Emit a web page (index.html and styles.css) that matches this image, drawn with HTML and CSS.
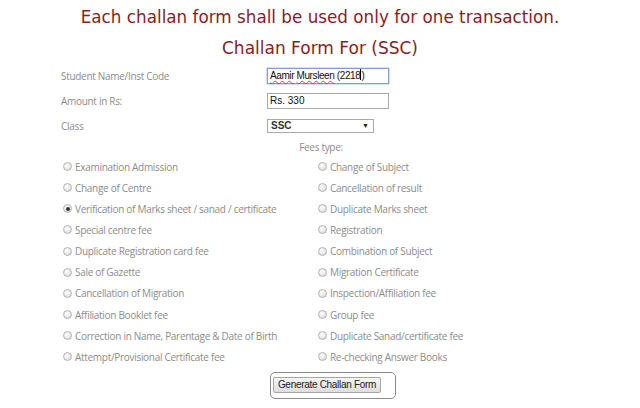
FILE: index.html
```html
<!DOCTYPE html>
<html>
<head>
<meta charset="utf-8">
<link rel="stylesheet" href="styles.css">
</head>
<body>
<div class="page">
  <h1 class="notice">Each challan form shall be used only for one transaction.</h1>
  <h2 class="title">Challan Form For (SSC)</h2>
  <form class="form">
    <div class="row">
      <label class="lbl">Student Name/Inst Code</label>
      <div class="field focused name"><span class="spell">Aamir</span> <span class="spell">Mursleen</span> (2218<span class="caret"></span>)</div>
    </div>
    <div class="row">
      <label class="lbl">Amount in Rs:</label>
      <div class="field">Rs. 330</div>
    </div>
    <div class="row">
      <label class="lbl">Class</label>
      <div class="select"><span>SSC</span><span class="arrow">▼</span></div>
    </div>
    <div class="fees-head">Fees type:</div>
    <div class="radios">
      <div class="opt"><span class="radio"></span>Examination Admission</div>
      <div class="opt"><span class="radio"></span>Change of Subject</div>
      <div class="opt"><span class="radio"></span>Change of Centre</div>
      <div class="opt"><span class="radio"></span>Cancellation of result</div>
      <div class="opt"><span class="radio checked"></span>Verification of Marks sheet / sanad / certificate</div>
      <div class="opt"><span class="radio"></span>Duplicate Marks sheet</div>
      <div class="opt"><span class="radio"></span>Special centre fee</div>
      <div class="opt"><span class="radio"></span>Registration</div>
      <div class="opt"><span class="radio"></span>Duplicate Registration card fee</div>
      <div class="opt"><span class="radio"></span>Combination of Subject</div>
      <div class="opt"><span class="radio"></span>Sale of Gazette</div>
      <div class="opt"><span class="radio"></span>Migration Certificate</div>
      <div class="opt"><span class="radio"></span>Cancellation of Migration</div>
      <div class="opt"><span class="radio"></span>Inspection/Affiliation fee</div>
      <div class="opt"><span class="radio"></span>Affiliation Booklet fee</div>
      <div class="opt"><span class="radio"></span>Group fee</div>
      <div class="opt"><span class="radio"></span>Correction in Name, Parentage &amp; Date of Birth</div>
      <div class="opt"><span class="radio"></span>Duplicate Sanad/certificate fee</div>
      <div class="opt"><span class="radio"></span>Attempt/Provisional Certificate fee</div>
      <div class="opt"><span class="radio"></span>Re-checking Answer Books</div>
    </div>
    <div class="submit-wrap">
      <div class="submit-box"><button type="button" class="btn">Generate Challan Form</button></div>
    </div>
  </form>
</div>
</body>
</html>
```

FILE: styles.css
```css
* { box-sizing: border-box; }
html, body { margin: 0; padding: 0; background: #fff; }
.page { width: 640px; height: 408px; overflow: hidden; }
.notice {
  margin: 0;
  padding-top: 6px;
  height: 31px;
  text-align: center;
  font-family: "DejaVu Sans", sans-serif;
  font-weight: normal;
  font-size: 16.8px;
  line-height: 22px;
  color: #8b1c24;
}
.title {
  margin: 0;
  height: 31px;
  padding-top: 6px;
  text-align: center;
  font-family: "DejaVu Sans", sans-serif;
  font-weight: normal;
  font-size: 17px;
  line-height: 22px;
  color: #8b1c24;
}
.form {
  font-family: "Open Sans", sans-serif;
  font-size: 10px;
  letter-spacing: -0.3px;
  color: #8c8c8c;
  padding-left: 61px;
}
.row {
  display: grid;
  grid-template-columns: 206px auto;
  align-items: center;
  height: 25px;
}
.row:first-child { margin-top: 1px; }
.lbl { line-height: 14px; }
.field {
  width: 122px;
  height: 16px;
  border: 1px solid #a9a9a9;
  font-family: "Liberation Sans", Arial, sans-serif;
  font-size: 10px;
  letter-spacing: 0;
  color: #111;
  line-height: 14px;
  padding-left: 2px;
  white-space: nowrap;
}
.field.name { letter-spacing: -0.4px; }
.field.focused { border-color: #7f9fd6; box-shadow: 0 0 0 0.5px #a9c2ea; }
.spell { text-decoration: underline wavy #e04040; text-decoration-thickness: 1px; text-underline-offset: 1px; }
.caret { display: inline-block; width: 1px; height: 11px; background: #000; vertical-align: -1px; }
.select {
  width: 107px;
  height: 14px;
  border: 1px solid #a9a9a9;
  display: flex;
  justify-content: space-between;
  align-items: center;
  padding: 0 4px 0 3px;
  font-family: "Liberation Sans", Arial, sans-serif;
  font-size: 10px;
  letter-spacing: 0;
  font-weight: bold;
  color: #333;
}
.arrow { font-size: 7px; color: #222; }
.fees-head {
  text-align: center;
  width: 520px;
  line-height: 14px;
  margin-top: 2px;
  height: 14px;
}
.radios {
  display: grid;
  grid-template-columns: 255px auto;
  grid-auto-rows: 21.15px;
  margin-top: 2px;
  padding-left: 2px;
  align-items: center;
}
.opt { display: flex; align-items: center; line-height: 14px; white-space: nowrap; }
.radio {
  width: 9px;
  height: 9px;
  border-radius: 50%;
  border: 1px solid #b3b3b3;
  background: radial-gradient(circle at 40% 35%, #fff 0%, #e6e6e6 60%, #cfcfcf 100%);
  margin-right: 3px;
  flex: none;
  position: relative;
}
.radio.checked::after {
  content: "";
  position: absolute;
  left: 1.5px; top: 1.5px;
  width: 4px; height: 4px;
  border-radius: 50%;
  background: #333;
}
.submit-wrap { padding-left: 209px; margin-top: 5px; }
.submit-box {
  width: 126px;
  height: 27px;
  border: 1px solid #8a8a8a;
  border-radius: 5px;
  padding: 4px 0 0 2px;
}
.btn {
  width: 108px;
  height: 16px;
  margin: 0;
  padding: 0;
  border: 1px solid #a6a6a6;
  border-radius: 2px;
  background: linear-gradient(#f6f6f6, #dedede);
  font-family: "Liberation Sans", Arial, sans-serif;
  font-size: 10px;
  letter-spacing: -0.3px;
  white-space: nowrap;
  color: #222;
  line-height: 14px;
}
```
